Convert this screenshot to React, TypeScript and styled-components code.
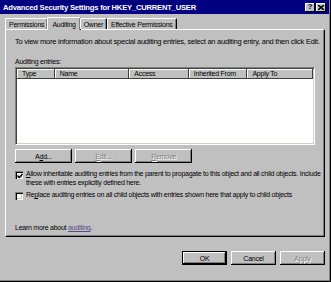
import React from 'react';
import styled, { createGlobalStyle } from 'styled-components';

const GlobalStyle = createGlobalStyle`
  html, body {
    margin: 0;
    padding: 0;
    background: #c0c0c0;
  }
  body {
    font-family: "Liberation Sans", Arial, sans-serif;
    font-size: 7px;
    letter-spacing: -0.25px;
    color: #000;
  }
`;

const columns = [
  { label: 'Type', width: 38 },
  { label: 'Name', width: 75 },
  { label: 'Access', width: 60 },
  { label: 'Inherited From', width: 59 },
  { label: 'Apply To', width: 66 },
];

const tabs = ['Permissions', 'Auditing', 'Owner', 'Effective Permissions'];

const App: React.FC = () => {
  return (
    <Window>
      <GlobalStyle />
      <TitleBar>
        <Title>Advanced Security Settings for HKEY_CURRENT_USER</Title>
        <TitleButtons>
          <TitleButton>?</TitleButton>
          <TitleButton>
            <svg width="6" height="5" viewBox="0 0 6 5">
              <path d="M0 0 L6 5 M6 0 L0 5" stroke="#000" strokeWidth="1.5" />
            </svg>
          </TitleButton>
        </TitleButtons>
      </TitleBar>

      <Body>
        <TabRow>
          {tabs.map((t, i) => (
            <Tab key={t} active={i === 1}>
              {t}
            </Tab>
          ))}
        </TabRow>
        <Panel>
          <Info>To view more information about special auditing entries, select an auditing entry, and then click Edit.</Info>
          <Label>Auditing entries:</Label>
          <ListBox>
            <HeaderRow>
              {columns.map((c) => (
                <HeaderCell key={c.label} style={{ width: c.width }}>
                  {c.label}
                </HeaderCell>
              ))}
            </HeaderRow>
          </ListBox>
          <ButtonRow>
            <Button>
              A<u>d</u>d...
            </Button>
            <Button disabled>
              <u>E</u>dit...
            </Button>
            <Button disabled>
              <u>R</u>emove
            </Button>
          </ButtonRow>
          <CheckGroup>
            <CheckRow>
              <CheckBox>
                <svg width="6" height="6" viewBox="0 0 6 6">
                  <path d="M0.5 2.5 L2.2 4.5 L5.5 1" stroke="#000" strokeWidth="1.4" fill="none" />
                </svg>
              </CheckBox>
              <CheckText>
                <u>A</u>llow inheritable auditing entries from the parent to propagate to this object and all child objects. Include
                these with entries explicitly defined here.
              </CheckText>
            </CheckRow>
            <CheckRow>
              <CheckBox />
              <CheckText>
                Re<u>p</u>lace auditing entries on all child objects with entries shown here that apply to child objects
              </CheckText>
            </CheckRow>
          </CheckGroup>
          <Spacer />
          <LearnMore>
            Learn more about <LinkText>auditing</LinkText>.
          </LearnMore>
        </Panel>
        <Footer>
          <FooterButton isDefault>OK</FooterButton>
          <FooterButton>Cancel</FooterButton>
          <FooterButton disabled>Apply</FooterButton>
        </Footer>
      </Body>
    </Window>
  );
};

const Window = styled.div`
  width: 331px;
  height: 282px;
  box-sizing: border-box;
  background: #c0c0c0;
  display: flex;
  flex-direction: column;
  border-right: 1px solid #000;
  border-bottom: 1px solid #000;
  box-shadow: inset -1px -1px 0 #808080;
  overflow: hidden;
`;

const TitleBar = styled.div`
  height: 14px;
  background: #000080;
  display: flex;
  align-items: center;
  justify-content: space-between;
  padding: 0 3px 0 3px;
  margin-right: 1px;
`;

const Title = styled.div`
  color: #fff;
  font-weight: bold;
  font-size: 7.6px;
  letter-spacing: -0.2px;
`;

const TitleButtons = styled.div`
  display: flex;
  gap: 1px;
`;

const TitleButton = styled.div`
  width: 10px;
  height: 9px;
  background: #c0c0c0;
  box-shadow: inset -1px -1px 0 #000, inset 1px 1px 0 #fff;
  display: flex;
  align-items: center;
  justify-content: center;
  font-weight: bold;
  font-size: 7.5px;
  line-height: 1;
`;

const Body = styled.div`
  flex: 1;
  display: flex;
  flex-direction: column;
  padding: 3px 5px 0 5px;
`;

const TabRow = styled.div`
  display: flex;
  align-items: flex-end;
  height: 12px;
  position: relative;
  z-index: 1;
`;

const Tab = styled.div<{ active?: boolean }>`
  height: ${(p) => (p.active ? 13 : 11)}px;
  padding: 0 ${(p) => (p.active ? 4 : 3)}px;
  margin: ${(p) => (p.active ? '0 -1px' : '0')};
  box-sizing: border-box;
  display: flex;
  align-items: center;
  background: #c0c0c0;
  border-top: 1px solid #fff;
  border-left: 1px solid #fff;
  border-right: 1px solid #000;
  box-shadow: inset -1px 0 0 #808080;
  border-radius: 1px 1px 0 0;
  margin-bottom: ${(p) => (p.active ? -1 : 0)}px;
  white-space: nowrap;
`;

const Panel = styled.div`
  width: 320px;
  height: 208px;
  box-sizing: border-box;
  border-top: 1px solid #fff;
  border-left: 1px solid #fff;
  border-right: 1px solid #000;
  border-bottom: 1px solid #000;
  box-shadow: inset -1px -1px 0 #808080;
  padding: 7px 9px 0 9px;
  display: flex;
  flex-direction: column;
`;

const Info = styled.div`
  white-space: nowrap;
  font-size: 7.5px;
  line-height: 9px;
`;

const Label = styled.div`
  margin-top: 11px;
  line-height: 9px;
`;

const ListBox = styled.div`
  margin-top: 1px;
  width: 300px;
  height: 78px;
  box-sizing: border-box;
  background: #fff;
  border-top: 1px solid #808080;
  border-left: 1px solid #808080;
  border-right: 1px solid #fff;
  border-bottom: 1px solid #fff;
  box-shadow: inset 1px 1px 0 #404040, inset -1px -1px 0 #d4d0c8;
  padding: 1px;
`;

const HeaderRow = styled.div`
  display: flex;
  height: 10px;
`;

const HeaderCell = styled.div`
  box-sizing: border-box;
  background: #c0c0c0;
  box-shadow: inset -1px -1px 0 #404040, inset 1px 1px 0 #fff;
  padding-left: 5px;
  line-height: 10px;
  white-space: nowrap;
  overflow: hidden;
`;

const ButtonRow = styled.div`
  display: flex;
  gap: 3px;
  margin-top: 4px;
`;

const Button = styled.div<{ disabled?: boolean }>`
  width: 57px;
  height: 14px;
  box-sizing: border-box;
  display: flex;
  align-items: center;
  justify-content: center;
  background: #c0c0c0;
  box-shadow: inset -1px -1px 0 #000, inset 1px 1px 0 #fff, inset -2px -2px 0 #808080;
  color: ${(p) => (p.disabled ? '#808080' : '#000')};
  text-shadow: ${(p) => (p.disabled ? '1px 1px 0 #fff' : 'none')};
`;

const CheckGroup = styled.div`
  display: flex;
  flex-direction: column;
  gap: 3px;
  margin-top: 6px;
`;

const CheckRow = styled.div`
  display: flex;
  align-items: flex-start;
  gap: 3px;
`;

const CheckBox = styled.div`
  flex: none;
  width: 8px;
  height: 8px;
  margin-top: 2px;
  background: #fff;
  box-shadow: inset 1px 1px 0 #808080, inset 2px 2px 0 #000, inset -1px -1px 0 #fff, inset -2px -2px 0 #c0c0c0;
  display: flex;
  align-items: center;
  justify-content: center;
  box-sizing: border-box;
  padding: 1px 0 0 1px;
`;

const CheckText = styled.div`
  line-height: 9px;
  width: 296px;
  flex: none;
`;

const Spacer = styled.div`
  flex: 1;
`;

const LearnMore = styled.div`
  margin-bottom: 5px;
`;

const LinkText = styled.span`
  color: #5a4a8a;
  text-decoration: underline;
`;

const Footer = styled.div`
  display: flex;
  justify-content: flex-end;
  gap: 4px;
  padding-top: 14px;
  width: 320px;
`;

const FooterButton = styled.div<{ isDefault?: boolean; disabled?: boolean }>`
  width: 45px;
  height: 14px;
  box-sizing: border-box;
  display: flex;
  align-items: center;
  justify-content: center;
  background: #c0c0c0;
  border: ${(p) => (p.isDefault ? '1px solid #000' : 'none')};
  box-shadow: inset -1px -1px 0 #000, inset 1px 1px 0 #fff, inset -2px -2px 0 #808080;
  color: ${(p) => (p.disabled ? '#808080' : '#000')};
  text-shadow: ${(p) => (p.disabled ? '1px 1px 0 #fff' : 'none')};
`;

export default App;
